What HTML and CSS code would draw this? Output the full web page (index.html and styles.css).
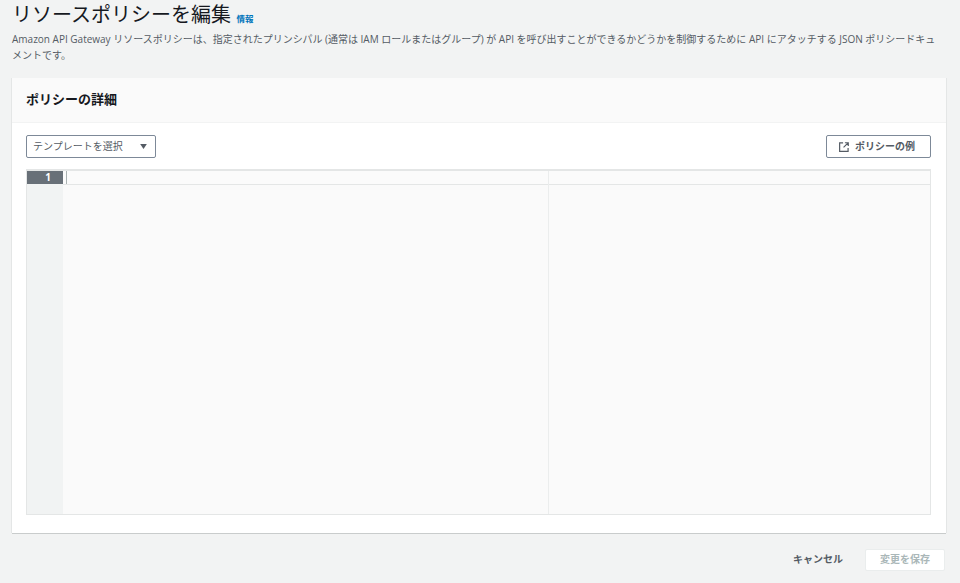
FILE: index.html
```html
<!DOCTYPE html>
<html lang="ja">
<head>
<meta charset="utf-8">
<title>リソースポリシーを編集</title>
<link rel="stylesheet" href="styles.css">
</head>
<body>
<main class="page">
  <header class="page-head">
    <h1 class="title">リソースポリシーを編集 <a class="info" href="#">情報</a></h1>
    <p class="desc">Amazon API Gateway リソースポリシーは、指定されたプリンシパル (通常は IAM ロールまたはグループ) が API を呼び出すことができるかどうかを制御するために API にアタッチする JSON ポリシードキュメントです。</p>
  </header>
  <section class="card">
    <div class="card-head"><h2 class="card-title">ポリシーの詳細</h2></div>
    <div class="card-body">
      <div class="toolbar">
        <button class="select" type="button"><span>テンプレートを選択</span><svg class="caret" width="7" height="5" viewBox="0 0 8 6"><path d="M0 0h8L4 6z" fill="#545b64"/></svg></button>
        <button class="example" type="button"><svg class="ext" width="10" height="10" viewBox="0 0 11 11" fill="none" stroke="#545b64" stroke-width="1.3"><path d="M4.5 1H.7v9.3H10V6.5"/><path d="M5 6l5-5M6.5 .8h3.7v3.7"/></svg><span>ポリシーの例</span></button>
      </div>
      <div class="editor">
        <div class="gutter"><div class="gutter-active">1</div></div>
        <div class="code">
          <div class="active-line"><span class="cursor"></span></div>
          <div class="margin-line"></div>
        </div>
      </div>
    </div>
  </section>
  <footer class="actions">
    <a class="cancel" href="#">キャンセル</a>
    <button class="save" type="button" disabled>変更を保存</button>
  </footer>
</main>
</body>
</html>
```
FILE: styles.css
```css
* { box-sizing: border-box; }
html, body { margin: 0; padding: 0; height: 100%; }
body {
  background: #f2f3f3;
  color: #16191f;
  font-family: "Open Sans", "Noto Sans CJK JP", sans-serif;
  overflow: hidden;
}
.page { padding: 0 14px 0 12px; }
.page-head { height: 78px; }
.title {
  margin: 0;
  font-family: "Noto Sans CJK JP", sans-serif;
  font-size: 20px;
  font-weight: 400;
  line-height: 28px;
  color: #16191f;
}
.info {
  font-size: 8.5px;
  font-weight: 700;
  line-height: 1;
  color: #0073bb;
  text-decoration: none;
  margin-left: 1px;
}
.desc {
  margin: 3px 0 0;
  width: 925px;
  font-size: 10px;
  line-height: 16px;
  color: #545b64;
}
.card {
  height: 455px;
  background: #fff;
  box-shadow: -1px 0 0 #e4e6e6, 1px 0 0 #e4e6e6, 0 1px 0 #c9cccc;
}
.card-head {
  height: 45px;
  padding: 0 14px 3px;
  display: flex;
  align-items: center;
  background: #fafafa;
  border-bottom: 1px solid #f2f3f3;
}
.card-title {
  margin: 0;
  font-size: 13px;
  font-weight: 700;
  color: #16191f;
}
.card-body { padding: 12px 15px 0 14px; }
.toolbar {
  display: flex;
  justify-content: space-between;
  height: 23px;
}
button { font-family: inherit; }
.select, .example {
  height: 23px;
  background: #fff;
  border: 1px solid #7d8998;
  border-radius: 2px;
  display: flex;
  align-items: center;
  font-size: 10px;
  color: #545b64;
  padding: 0 0 2px;
}
.select { width: 130px; padding: 0 8px 2px 6px; justify-content: space-between; }
.caret { display: block; margin-top: 2px; }
.example {
  width: 105px;
  padding-left: 12px;
  font-weight: 700;
}
.ext { margin-right: 6px; margin-top: 2px; flex: none; }
.editor {
  margin-top: 11px;
  height: 346px;
  display: flex;
  border: 1px solid #e4e6e6;
  border-top-width: 2px;
  background: #fafafa;
}
.gutter { width: 36px; background: #f1f3f3; flex: none; }
.gutter-active {
  height: 13px;
  background: #687078;
  color: #fff;
  font-size: 10px;
  font-weight: 700;
  line-height: 13px;
  text-align: right;
  padding-right: 12px;
}
.code { flex: 1; position: relative; }
.active-line {
  height: 14px;
  border-bottom: 1px solid #e4e6e6;
  background: #fbfbfb;
  padding-left: 3px;
}
.cursor { display: block; width: 1px; height: 13px; background: #aab2b2; }
.margin-line {
  position: absolute;
  left: 485px;
  top: 0;
  bottom: 0;
  width: 1px;
  background: #ebeded;
}
.actions {
  display: flex;
  justify-content: flex-end;
  align-items: center;
  gap: 22px;
  margin-top: 16px;
}
.cancel {
  font-size: 10px;
  font-weight: 700;
  color: #545b64;
  text-decoration: none;
  margin-bottom: 3px;
}
.save {
  width: 80px;
  height: 22px;
  margin-right: 1px;
  background: #fff;
  border: 1px solid #eaeded;
  border-radius: 2px;
  font-size: 10px;
  font-weight: 700;
  color: #aab7b8;
  padding: 0 0 3px;
}
```
